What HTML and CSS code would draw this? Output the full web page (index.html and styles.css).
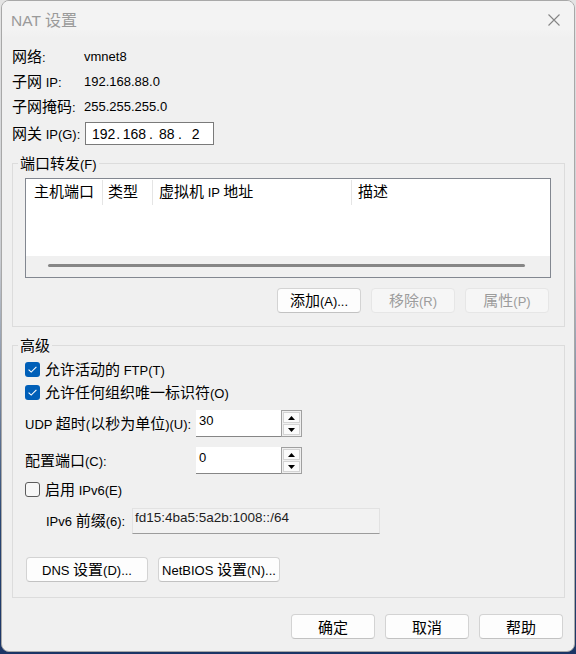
FILE: index.html
```html
<!DOCTYPE html>
<html lang="zh-CN">
<head>
<meta charset="utf-8">
<title>NAT 设置</title>
<link rel="stylesheet" href="styles.css">
</head>
<body>
<div class="window">
  <div class="titlebar">
    <div class="title">NAT <span class="tz">设置</span></div>
    <svg class="close" width="12" height="12" viewBox="0 0 12 12"><path d="M0.5 0.5L11.5 11.5M11.5 0.5L0.5 11.5" stroke="#858585" stroke-width="1.1" fill="none"/></svg>
  </div>
  <div class="content">
    <div class="info">
      <div class="lbl"><span class="z">网络</span>:</div><div class="val">vmnet8</div>
      <div class="lbl"><span class="z">子网</span> IP:</div><div class="val">192.168.88.0</div>
      <div class="lbl"><span class="z">子网掩码</span>:</div><div class="val">255.255.255.0</div>
      <div class="lbl"><span class="z">网关</span> IP(G):</div>
      <div class="val">
        <div class="ipbox"><span class="oct">192</span><span class="dot">.</span><span class="oct">168</span><span class="dot">.</span><span class="oct">88</span><span class="dot">.</span><span class="oct">2</span></div>
      </div>
    </div>

    <div class="group g1">
      <div class="legend"><span class="z">端口转发</span>(F)</div>
      <div class="list">
        <div class="list-head">
          <div class="col c1"><span class="z">主机端口</span></div>
          <div class="col c2"><span class="z">类型</span></div>
          <div class="col c3"><span class="z">虚拟机</span> IP <span class="z">地址</span></div>
          <div class="col c4"><span class="z">描述</span></div>
        </div>
        <div class="list-body"></div>
        <div class="hscroll"><div class="thumb"></div></div>
      </div>
      <div class="btnrow">
        <div class="btn"><span><span class="z">添加</span>(A)...</span></div>
        <div class="btn dis"><span><span class="z">移除</span>(R)</span></div>
        <div class="btn dis"><span><span class="z">属性</span>(P)</span></div>
      </div>
    </div>

    <div class="group g2">
      <div class="legend"><span class="z">高级</span></div>
      <div class="cbrow first">
        <span class="cb on"><svg width="15" height="15" viewBox="0 0 15 15"><path d="M3.6 7.6L6.2 10.1L11.4 4.9" stroke="#fff" stroke-width="1.1" fill="none"/></svg></span>
        <span><span class="z">允许活动的</span> FTP(T)</span>
      </div>
      <div class="cbrow">
        <span class="cb on"><svg width="15" height="15" viewBox="0 0 15 15"><path d="M3.6 7.6L6.2 10.1L11.4 4.9" stroke="#fff" stroke-width="1.1" fill="none"/></svg></span>
        <span><span class="z">允许任何组织唯一标识符</span>(O)</span>
      </div>
      <div class="spinrow udp">
        <div class="lab">UDP <span class="z">超时</span>(<span class="z">以秒为单位</span>)(U):</div>
        <div class="spin">
          <div class="spin-field">30</div>
          <div class="spin-btns">
            <div class="sb"><svg width="7" height="4" viewBox="0 0 7 4"><polygon points="0,4 3.5,0 7,4" fill="#000"/></svg></div>
            <div class="sb"><svg width="7" height="4" viewBox="0 0 7 4"><polygon points="0,0 7,0 3.5,4" fill="#000"/></svg></div>
          </div>
        </div>
      </div>
      <div class="spinrow port">
        <div class="lab"><span class="z">配置端口</span>(C):</div>
        <div class="spin">
          <div class="spin-field">0</div>
          <div class="spin-btns">
            <div class="sb"><svg width="7" height="4" viewBox="0 0 7 4"><polygon points="0,4 3.5,0 7,4" fill="#000"/></svg></div>
            <div class="sb"><svg width="7" height="4" viewBox="0 0 7 4"><polygon points="0,0 7,0 3.5,4" fill="#000"/></svg></div>
          </div>
        </div>
      </div>
      <div class="cbrow ipv6">
        <span class="cb off"></span>
        <span><span class="z">启用</span> IPv6(E)</span>
      </div>
      <div class="prefixrow">
        <div class="lab">IPv6 <span class="z">前缀</span>(6):</div>
        <div class="dfield">fd15:4ba5:5a2b:1008::/64</div>
      </div>
      <div class="dnsrow">
        <div class="btn"><span>DNS <span class="z">设置</span>(D)...</span></div>
        <div class="btn"><span>NetBIOS <span class="z">设置</span>(N)...</span></div>
      </div>
    </div>

    <div class="footer">
      <div class="btn"><span class="z">确定</span></div>
      <div class="btn"><span class="z">取消</span></div>
      <div class="btn"><span class="z">帮助</span></div>
    </div>
  </div>
</div>
</body>
</html>
```

FILE: styles.css
```css
* { box-sizing: border-box; }
html, body { margin: 0; padding: 0; }
body {
  width: 576px;
  height: 654px;
  overflow: hidden;
  background: linear-gradient(to bottom, #e4e4e4 0, #c9ccd1 260px, #2a4773 520px, #1b3566 654px);
  font-family: "Liberation Sans", "Noto Sans CJK SC", sans-serif;
  font-size: 13px;
  color: #000;
}
.z {
  font-family: "Noto Sans CJK SC", sans-serif;
  font-size: 15px;
}

.window {
  margin-left: 1px;
  width: 574px;
  height: 652px;
  background: #f0f0f0;
  border: 1px solid #a8a8a8;
  border-radius: 8px;
  overflow: hidden;
  display: flex;
  flex-direction: column;
}
.titlebar {
  flex: none;
  height: 37px;
  background: linear-gradient(to bottom, #f3f3f3 0, #f3f3f3 28px, #f0f0f0 37px);
  display: flex;
  align-items: center;
  justify-content: space-between;
  padding: 0 14px 0 9px;
}
.title {
  color: #9a9a9a;
  font-size: 15.5px;
  line-height: 20px;
}
.title .tz {
  font-family: "Noto Sans CJK SC", sans-serif;
  font-size: 16px;
}
.close { display: block; }

.content {
  flex: 1;
  display: flex;
  flex-direction: column;
}

/* info */
.info {
  margin: 9px 0 0 10px;
  display: grid;
  grid-template-columns: 72px auto;
  grid-template-rows: 20px 20px 20px 23px;
  row-gap: 5px;
  align-items: center;
  line-height: 20px;
}
.ipbox {
  margin-left: 1px;
  width: 129px;
  height: 23px;
  border: 1px solid #7a7a7a;
  background: #fff;
  display: flex;
  align-items: center;
  padding-left: 6px;
  font-size: 14px;
  line-height: 18px;
}
.ipbox .dot:nth-child(2) { margin-left: 1px; }
.ipbox .oct:nth-child(3) { margin-left: 2.5px; }
.ipbox .dot:nth-child(4) { margin-left: 3px; }
.ipbox .oct:nth-child(5) { margin-left: 6px; }
.ipbox .dot:nth-child(6) { margin-left: 3.4px; }
.ipbox .oct:nth-child(7) { margin-left: 9.8px; }

/* group boxes */
.group {
  margin: 18px 9px 0 10px;
  border: 1px solid #dcdcdc;
  padding: 0 13px 13px 12px;
  display: flex;
  flex-direction: column;
}
.g2 { padding-bottom: 15px; }
.legend {
  align-self: flex-start;
  margin: -10px 0 0 -7px;
  padding: 0 2px;
  height: 18px;
  line-height: 18px;
  background: #f0f0f0;
}

/* list view */
.list {
  margin-top: 6px;
  height: 100px;
  border: 1px solid #828790;
  background: #fff;
  display: flex;
  flex-direction: column;
}
.list-head {
  flex: none;
  display: flex;
  height: 26px;
  padding-top: 1px;
}
.col {
  flex: none;
  height: 25px;
  line-height: 22px;
  border-right: 1px solid #e5e5e5;
  white-space: nowrap;
}
.c1 { width: 77px; padding-left: 8px; }
.c2 { width: 50px; padding-left: 5px; }
.c3 { width: 199px; padding-left: 6px; }
.c4 { flex: 1; border-right: none; padding-left: 6px; }
.list-body { flex: 1; }
.hscroll {
  flex: none;
  height: 21px;
  background: #f0f0f0;
  padding: 8px 25px 0 22px;
}
.thumb {
  height: 3px;
  background: #868686;
  border-radius: 2px;
}

/* buttons */
.btnrow {
  margin-top: 10px;
  display: flex;
  justify-content: flex-end;
  gap: 10px;
  padding-right: 2px;
}
.btn {
  width: 84px;
  height: 25px;
  border: 1px solid #d3d3d3;
  border-bottom-color: #c2c2c2;
  border-radius: 4px;
  background: #fdfdfd;
  display: flex;
  align-items: center;
  justify-content: center;
  line-height: 18px;
  white-space: nowrap;
}
.btn.dis {
  background: #f6f6f6;
  border-color: #e6e6e6;
  color: #9c9c9c;
}

/* advanced */
.cbrow {
  display: flex;
  align-items: center;
  height: 23px;
  gap: 5px;
  line-height: 20px;
}
.cbrow.first { margin-top: 4px; }
.cbrow.ipv6 { margin-top: 4px; }
.cb {
  flex: none;
  width: 15px;
  height: 15px;
  border-radius: 3px;
  display: block;
}
.cb svg { display: block; }
.cb.on { background: #005fb8; }
.cb.off {
  border: 1px solid #5c5c5c;
  background: #f7f7f7;
}

.spinrow {
  display: flex;
  align-items: center;
  height: 27px;
  line-height: 20px;
}
.spinrow.udp { margin-top: 6px; }
.spinrow.port { margin-top: 10px; }
.spinrow .lab { width: 171px; white-space: nowrap; }
.spin {
  display: flex;
  height: 27px;
}
.spin-field {
  width: 85px;
  background: #fff;
  border-bottom: 1px solid #868686;
  padding: 2px 0 0 3px;
  line-height: 18px;
}
.spin-btns {
  width: 21px;
  border: 1px solid #a0a0a0;
  background: #f0f0f0;
  display: flex;
  flex-direction: column;
  padding: 1px;
  gap: 1px;
}
.sb {
  flex: 1;
  border: 1px solid #d4d4d4;
  background: #fbfbfb;
  display: flex;
  align-items: center;
  justify-content: center;
}
.sb svg { display: block; }

.prefixrow {
  margin-top: 7px;
  display: flex;
  align-items: center;
  height: 26px;
  padding-left: 21px;
  line-height: 20px;
}
.prefixrow .lab { width: 86px; white-space: nowrap; }
.dfield {
  width: 248px;
  height: 26px;
  background: #f2f2f2;
  border: 1px solid #e2e2e2;
  border-bottom-color: #9c9c9c;
  padding: 0 0 0 2px;
  line-height: 18px;
  font-size: 13.5px;
  color: #1e1e1e;
}

.dnsrow {
  margin: 23px 0 0 1px;
  display: flex;
  gap: 10px;
}
.dnsrow .btn { width: 122px; }

/* footer */
.footer {
  margin-top: 16px;
  display: flex;
  justify-content: flex-end;
  gap: 10px;
  padding-right: 11px;
}
```
